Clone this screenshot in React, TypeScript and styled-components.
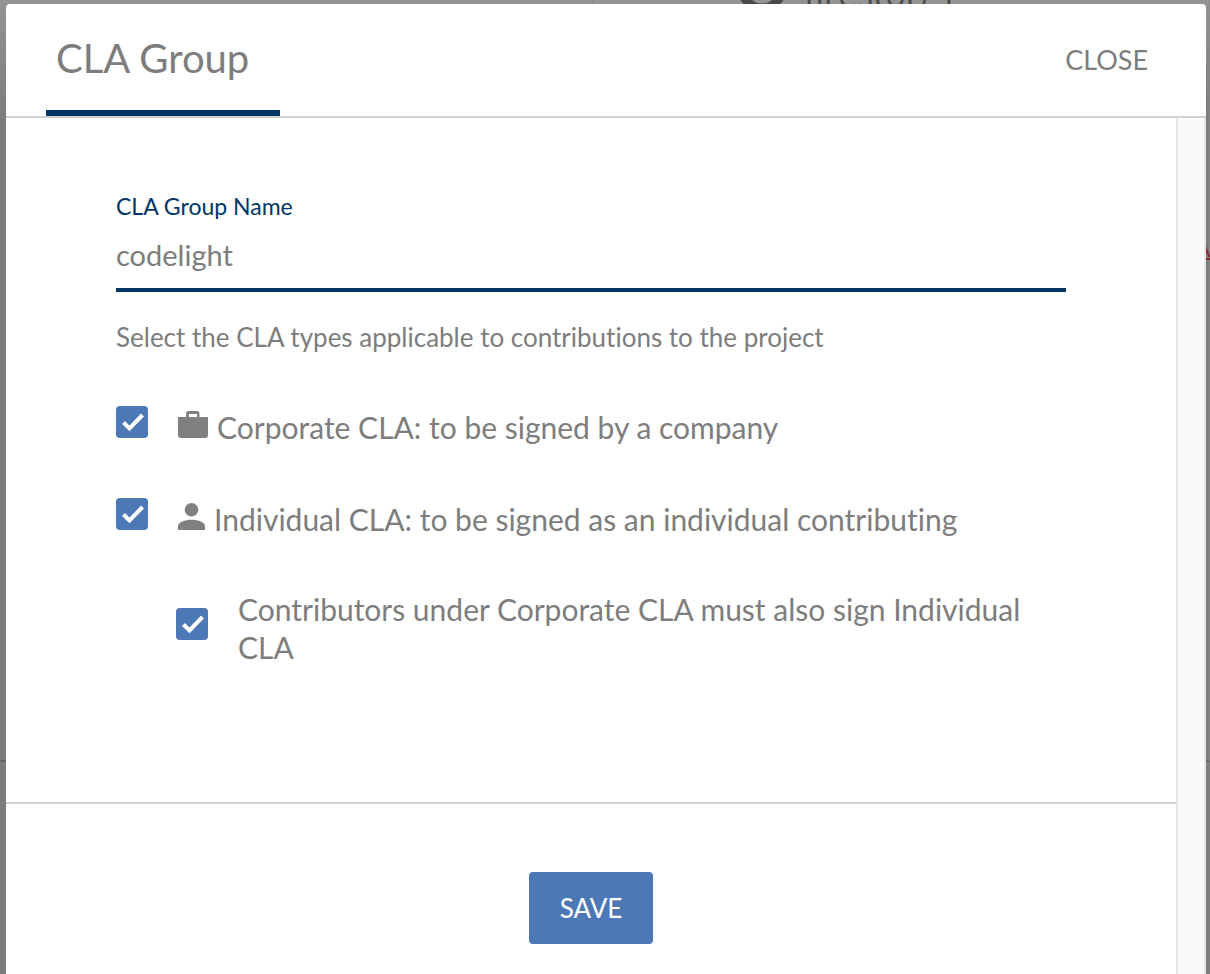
import React, { useState } from "react";
import styled, { createGlobalStyle } from "styled-components";

const GlobalStyle = createGlobalStyle`
  * { box-sizing: border-box; }
  html, body, #root { height: 100%; }
  body {
    margin: 0;
    overflow: hidden;
    background: #808080;
    color: #7d7d7d;
    font-family: Lato, "Gill Sans", sans-serif;
    font-variant-ligatures: none;
  }
  button, input { font-family: inherit; }
`;

const Backdrop = styled.div`
  position: relative;
  height: 100%;
  overflow: hidden;
  background: linear-gradient(#949494, #7c7c7c 120px, #7d7d7d);
`;

const PageBehind = styled.div`
  position: absolute;
  inset: 0;
  display: grid;
  grid-template-columns: 49% 1fr;
  grid-template-rows: 762px 1fr;
`;

const PageCell = styled.div`
  border-bottom: 2px solid #666;
  border-right: 1px solid #888;
`;

const ProjectPeek = styled.span`
  position: absolute;
  top: -28px;
  left: 740px;
  display: flex;
  gap: 20px;
  color: #4a4a4a;
  font-family: "Open Sans", sans-serif;
  font-size: 34px;
  font-weight: 500;
  line-height: 44px;
  white-space: nowrap;
`;

const Ring = styled.svg`
  width: 44px;
  height: 44px;
`;

const LinkPeek = styled.a`
  position: absolute;
  top: 237px;
  left: 1197px;
  color: #8a2a2c;
  font-size: 20px;
  line-height: 24px;
  text-decoration-thickness: 2px;
`;

const Dialog = styled.section`
  position: absolute;
  inset: 4px 4px 0 6px;
  display: flex;
  flex-direction: column;
  background: #fff;
  border-radius: 4px 4px 0 0;
  overflow: hidden;
`;

const Header = styled.header`
  display: flex;
  justify-content: space-between;
  flex: none;
  height: 114px;
  padding: 0 50px 0 40px;
  border-bottom: 2px solid #d1d1d1;
`;

const Title = styled.h1`
  margin: 0;
  width: 234px;
  padding: 30px 0 0 10px;
  border-bottom: 6px solid #003764;
  font-size: 40px;
  font-weight: 400;
  line-height: 48px;
`;

const CloseButton = styled.button`
  align-self: center;
  padding: 8px;
  border: 0;
  background: none;
  color: inherit;
  font-size: 27px;
  line-height: 32px;
`;

const Body = styled.div`
  display: flex;
  flex: 1;
  min-height: 0;
`;

const Form = styled.form`
  display: flex;
  flex-direction: column;
  flex: 1;
`;

const ScrollTrack = styled.div`
  width: 30px;
  border: solid #e7e7e7;
  border-width: 0 2px;
  background: #fafafa;
`;

const Fields = styled.div`
  padding: 72px 110px 136px;
`;

const FieldLabel = styled.label`
  display: block;
  color: #003764;
  font-size: 23px;
  line-height: 32px;
`;

const NameInput = styled.input`
  display: block;
  width: 100%;
  height: 70px;
  padding: 0 0 2px;
  border: 0;
  border-bottom: 4px solid #003764;
  outline: 0;
  background: none;
  color: inherit;
  font-size: 29px;
`;

const Hint = styled.p`
  margin: 27px 0 51px;
  font-size: 26px;
  line-height: 36px;
`;

const Option = styled.label<{ $nested?: boolean }>`
  display: flex;
  align-items: flex-start;
  gap: 30px;
  margin-left: ${(p) => (p.$nested ? 60 : 0)}px;
  min-height: ${(p) => (p.$nested ? 76 : 92)}px;
  font-size: 30px;
  line-height: 38px;
`;

const Check = styled.input`
  appearance: none;
  flex: none;
  width: 32px;
  height: 32px;
  margin: 0;
  border-radius: 4px;
  background: #4c79b6;
`;

const CheckBox = styled.span<{ $nested?: boolean }>`
  position: relative;
  display: flex;
  flex: none;
  margin-top: ${(p) => (p.$nested ? 18 : 0)}px;
`;

const Tick = styled.svg`
  position: absolute;
  inset: 0;
  width: 32px;
  height: 32px;
  pointer-events: none;
`;

const OptionText = styled.span`
  display: flex;
  gap: 9px;
  padding-top: 2px;
`;

const Glyph = styled.svg`
  flex: none;
  height: 31px;
  fill: #808080;
`;

const Footer = styled.footer`
  display: flex;
  justify-content: center;
  flex: 1;
  align-items: flex-start;
  padding: 68px 0 30px;
  border-top: 2px solid #d1d1d1;
`;

const SaveButton = styled.button`
  min-width: 124px;
  padding: 20px 30px;
  border: 0;
  border-radius: 4px;
  background: #4c79b6;
  color: #fff;
  font-size: 26px;
  line-height: 32px;
`;

type CheckOptionProps = { nested?: boolean; children: React.ReactNode };

function CheckOption({ nested, children }: CheckOptionProps) {
  const [on, setOn] = useState(true);
  return (
    <Option $nested={nested}>
      <CheckBox $nested={nested}>
        <Check type="checkbox" checked={on} onChange={() => setOn(!on)} />
        {on && (
          <Tick viewBox="0 0 32 32" aria-hidden="true">
            <path d="M7.500 16.500 13.500 22.500 26.500 9" fill="none" stroke="#fff" strokeWidth="4" />
          </Tick>
        )}
      </CheckBox>
      {children}
    </Option>
  );
}

export default function App() {
  const [name, setName] = useState("codelight");
  return (
    <>
      <GlobalStyle />
      <Backdrop>
        <PageBehind aria-hidden="true">
          <PageCell />
          <PageCell />
          <ProjectPeek>
            <Ring viewBox="0 0 44 44">
              <circle cx="22" cy="16" r="20" fill="none" stroke="#4a4a4a" strokeWidth="9" />
            </Ring>
            firestorg1
          </ProjectPeek>
          <LinkPeek href="#">A</LinkPeek>
        </PageBehind>
        <Dialog role="dialog" aria-labelledby="title">
          <Header>
            <Title id="title">CLA Group</Title>
            <CloseButton type="button">CLOSE</CloseButton>
          </Header>
          <Body>
            <Form onSubmit={(e) => e.preventDefault()}>
              <Fields>
                <FieldLabel htmlFor="name">CLA Group Name</FieldLabel>
                <NameInput id="name" value={name} onChange={(e) => setName(e.target.value)} />
                <Hint>Select the CLA types applicable to contributions to the project</Hint>
                <CheckOption>
                  <OptionText>
                    <Glyph width="30" viewBox="0 0 30 31" aria-hidden="true">
                      <path
                        fillRule="evenodd"
                        d="M8 9V5.500Q8 3 10.500 3H19Q21.500 3 21.500 5.500V9H30V27Q30 30 27 30H3Q0 30 0 27V9ZM11 9H19V6H11Z"
                      />
                    </Glyph>
                    Corporate CLA: to be signed by a company
                  </OptionText>
                </CheckOption>
                <CheckOption>
                  <OptionText>
                    <Glyph width="27" viewBox="0 0 27 31" aria-hidden="true">
                      <circle cx="13.500" cy="9.800" r="6.800" />
                      <path d="M0 30V26.500C0 22 7 19.800 13.500 19.800S27 22 27 26.500V30Z" />
                    </Glyph>
                    Individual CLA: to be signed as an individual contributing
                  </OptionText>
                </CheckOption>
                <CheckOption nested>
                  <span>Contributors under Corporate CLA must also sign Individual CLA</span>
                </CheckOption>
              </Fields>
              <Footer>
                <SaveButton type="submit">SAVE</SaveButton>
              </Footer>
            </Form>
            <ScrollTrack />
          </Body>
        </Dialog>
      </Backdrop>
    </>
  );
}
